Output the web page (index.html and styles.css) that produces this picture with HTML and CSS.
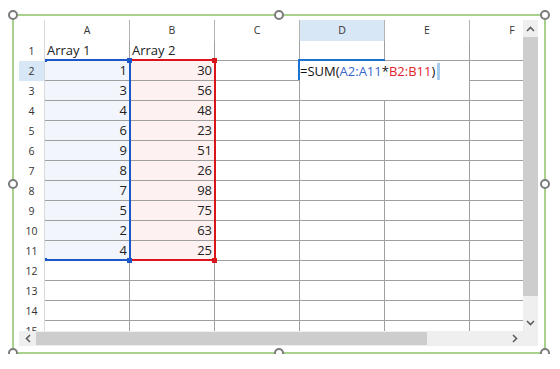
FILE: index.html
```html
<!DOCTYPE html>
<html lang="en">
<head>
  <meta charset="UTF-8" />
  <title>Array formula</title>
  <link rel="stylesheet" href="styles.css">
</head>
<body>

  <div class="frame">
    <span class="knob tl"></span>
    <span class="knob tm"></span>
    <span class="knob tr"></span>
    <span class="knob ml"></span>
    <span class="knob mr"></span>
    <span class="knob bl"></span>
    <span class="knob bm"></span>
    <span class="knob br"></span>

    <div class="sheet">
      <div class="grid">
        <div class="row head">
          <div class="rh"></div>
          <div class="ch">A</div><div class="ch">B</div><div class="ch">C</div>
          <div class="ch sel">D</div><div class="ch">E</div><div class="ch">F</div>
        </div>
        <div class="row">
          <div class="rh">1</div>
          <div class="c">Array 1</div><div class="c">Array 2</div>
          <div class="c"></div><div class="c"></div><div class="c"></div><div class="c"></div>
        </div>
        <div class="row">
          <div class="rh sel">2</div>
          <div class="c num fa">1</div><div class="c num fb">30</div>
          <div class="c"></div><div class="c"></div><div class="c"></div><div class="c"></div>
        </div>
        <div class="row">
          <div class="rh">3</div>
          <div class="c num fa">3</div><div class="c num fb">56</div>
          <div class="c"></div><div class="c"></div><div class="c"></div><div class="c"></div>
        </div>
        <div class="row">
          <div class="rh">4</div>
          <div class="c num fa">4</div><div class="c num fb">48</div>
          <div class="c"></div><div class="c"></div><div class="c"></div><div class="c"></div>
        </div>
        <div class="row">
          <div class="rh">5</div>
          <div class="c num fa">6</div><div class="c num fb">23</div>
          <div class="c"></div><div class="c"></div><div class="c"></div><div class="c"></div>
        </div>
        <div class="row">
          <div class="rh">6</div>
          <div class="c num fa">9</div><div class="c num fb">51</div>
          <div class="c"></div><div class="c"></div><div class="c"></div><div class="c"></div>
        </div>
        <div class="row">
          <div class="rh">7</div>
          <div class="c num fa">8</div><div class="c num fb">26</div>
          <div class="c"></div><div class="c"></div><div class="c"></div><div class="c"></div>
        </div>
        <div class="row">
          <div class="rh">8</div>
          <div class="c num fa">7</div><div class="c num fb">98</div>
          <div class="c"></div><div class="c"></div><div class="c"></div><div class="c"></div>
        </div>
        <div class="row">
          <div class="rh">9</div>
          <div class="c num fa">5</div><div class="c num fb">75</div>
          <div class="c"></div><div class="c"></div><div class="c"></div><div class="c"></div>
        </div>
        <div class="row">
          <div class="rh">10</div>
          <div class="c num fa">2</div><div class="c num fb">63</div>
          <div class="c"></div><div class="c"></div><div class="c"></div><div class="c"></div>
        </div>
        <div class="row">
          <div class="rh">11</div>
          <div class="c num fa">4</div><div class="c num fb">25</div>
          <div class="c"></div><div class="c"></div><div class="c"></div><div class="c"></div>
        </div>
        <div class="row">
          <div class="rh">12</div>
          <div class="c"></div><div class="c"></div><div class="c"></div>
          <div class="c"></div><div class="c"></div><div class="c"></div>
        </div>
        <div class="row">
          <div class="rh">13</div>
          <div class="c"></div><div class="c"></div><div class="c"></div>
          <div class="c"></div><div class="c"></div><div class="c"></div>
        </div>
        <div class="row">
          <div class="rh">14</div>
          <div class="c"></div><div class="c"></div><div class="c"></div>
          <div class="c"></div><div class="c"></div><div class="c"></div>
        </div>
        <div class="row">
          <div class="rh">15</div>
          <div class="c"></div><div class="c"></div><div class="c"></div>
          <div class="c"></div><div class="c"></div><div class="c"></div>
        </div>

        <!-- range highlights drawn over the cells -->
        <div class="range range-a"></div>
        <span class="tick tick-top"></span>
        <span class="tick tick-bottom"></span>
        <div class="range range-b"></div>
        <span class="grip grip-a top"></span>
        <span class="grip grip-a bottom"></span>
        <span class="grip grip-b top"></span>
        <span class="grip grip-b bottom"></span>

        <div class="editor">=SUM(<span class="ref-a">A2:A11</span>*<span class="ref-b">B2:B11</span>)<span class="caret"></span></div>
      </div>

      <div class="vscroll">
        <div class="btn">
          <svg width="9" height="6" viewBox="0 0 9 6"><path d="M1 5 L4.5 1.5 L8 5" fill="none" stroke="#5f5f5f" stroke-width="1.6"/></svg>
        </div>
        <div class="thumb"></div>
        <div class="spacer"></div>
        <div class="btn">
          <svg width="9" height="6" viewBox="0 0 9 6"><path d="M1 1 L4.5 4.5 L8 1" fill="none" stroke="#5f5f5f" stroke-width="1.6"/></svg>
        </div>
      </div>

      <div class="hscroll">
        <div class="btn">
          <svg width="6" height="9" viewBox="0 0 6 9"><path d="M5 1 L1.5 4.5 L5 8" fill="none" stroke="#5f5f5f" stroke-width="1.6"/></svg>
        </div>
        <div class="thumb"></div>
        <div class="spacer"></div>
        <div class="btn">
          <svg width="6" height="9" viewBox="0 0 6 9"><path d="M1 1 L4.5 4.5 L1 8" fill="none" stroke="#5f5f5f" stroke-width="1.6"/></svg>
        </div>
      </div>

      <div class="corner"></div>
    </div>
  </div>

</body>
</html>
```

FILE: styles.css
```css
body {
  margin: 0;
  background: #fff;
  font-family: "Open Sans", Arial, sans-serif;
  color: #222;
}

.frame {
  position: relative;
  box-sizing: border-box;
  width: 534px;
  height: 340px;
  margin: 14px 0 0 12px;
  padding: 4px 6px 6px 5px;
  border: 2px solid #a9d18e;
}

/* resize handles on the frame */
.knob {
  position: absolute;
  width: 6px;
  height: 6px;
  border: 2px solid #7b7b7b;
  border-radius: 50%;
  background: #fff;
  transform: translate(-50%, -50%);
  z-index: 5;
}
.knob.tl { left: -1px; top: -1px; }
.knob.tm { left: 50%; top: -1px; }
.knob.tr { left: calc(100% + 1px); top: -1px; }
.knob.ml { left: -1px; top: 50%; }
.knob.mr { left: calc(100% + 1px); top: 50%; }
.knob.bl { left: -1px; top: calc(100% + 1px); }
.knob.bm { left: 50%; top: calc(100% + 1px); }
.knob.br { left: calc(100% + 1px); top: calc(100% + 1px); }

.sheet {
  display: grid;
  grid-template-columns: 504px 15px;
  grid-template-rows: 311px 15px;
}

.grid {
  position: relative;
  overflow: hidden;
}

.row {
  display: flex;
  height: 20px;
}
.row.head {
  height: 21px;
}

.rh {
  flex: none;
  box-sizing: border-box;
  width: 26px;
  border-right: 1px solid #d9d9d9;
  font-size: 10.5px;
  line-height: 20px;
  text-align: center;
  color: #333;
}
.rh.sel {
  background: #d7e7f6;
}

.ch {
  flex: none;
  box-sizing: border-box;
  width: 85px;
  border-right: 1px solid #b4b4b4;
  font-size: 10.5px;
  line-height: 21px;
  text-align: center;
  color: #333;
}
.ch.sel {
  background: #d7e7f6;
}

.c {
  flex: none;
  box-sizing: border-box;
  width: 85px;
  padding: 0 2px;
  border-right: 1px solid #9f9f9f;
  border-bottom: 1px solid #9f9f9f;
  font-size: 13px;
  line-height: 19px;
  white-space: nowrap;
}
.c.num {
  text-align: right;
}
.fa {
  background: #f2f6fc;
}
.fb {
  background: #fdf1f1;
}

/* coloured range borders */
.range {
  position: absolute;
  top: 39px;
  box-sizing: border-box;
  height: 202px;
  border: 2px solid;
  border-left: none;
}
.range-a {
  left: 26px;
  width: 86px;
  border-color: #1c57c9;
}
.range-b {
  left: 112px;
  width: 85px;
  border-color: #d9141b;
}
.tick {
  position: absolute;
  left: 26px;
  width: 2px;
  height: 3px;
  background: #1c57c9;
}
.tick-top { top: 39px; }
.tick-bottom { top: 238px; }

.grip {
  position: absolute;
  width: 5px;
  height: 5px;
}
.grip.top { top: 38px; }
.grip.bottom { top: 238px; }
.grip-a { left: 108px; background: #1c57c9; }
.grip-b { left: 193px; background: #d9141b; }

/* in-cell formula editor over D2 */
.editor {
  position: absolute;
  left: 281px;
  top: 41px;
  width: 169px;
  height: 39px;
  background: #fff;
  font-size: 13px;
  line-height: 20px;
  white-space: nowrap;
  color: #111;
}
.editor::before {
  content: "";
  position: absolute;
  left: -2px;
  top: -2px;
  width: 87px;
  height: 2px;
  background: #1a73d1;
}
.editor::after {
  content: "";
  position: absolute;
  left: -2px;
  top: -2px;
  width: 2px;
  height: 21px;
  background: #1a73d1;
}
.ref-a {
  color: #3767c8;
}
.ref-b {
  color: #e0242b;
}
.caret {
  display: inline-block;
  width: 3px;
  height: 17px;
  margin-left: 2px;
  vertical-align: -4px;
  background: #a9cbec;
}

/* scrollbars */
.vscroll {
  display: flex;
  flex-direction: column;
  background: #efefef;
}
.vscroll .btn {
  height: 17px;
}
.vscroll .thumb {
  height: 259px;
  background: #cdcdcd;
}

.hscroll {
  display: flex;
  background: #efefef;
}
.hscroll .btn {
  width: 17px;
}
.hscroll .thumb {
  width: 391px;
  margin: 1px 0;
  background: #cdcdcd;
}

.btn {
  flex: none;
  display: flex;
  align-items: center;
  justify-content: center;
}
.spacer {
  flex: 1;
}
.corner {
  background: #efefef;
}
```
